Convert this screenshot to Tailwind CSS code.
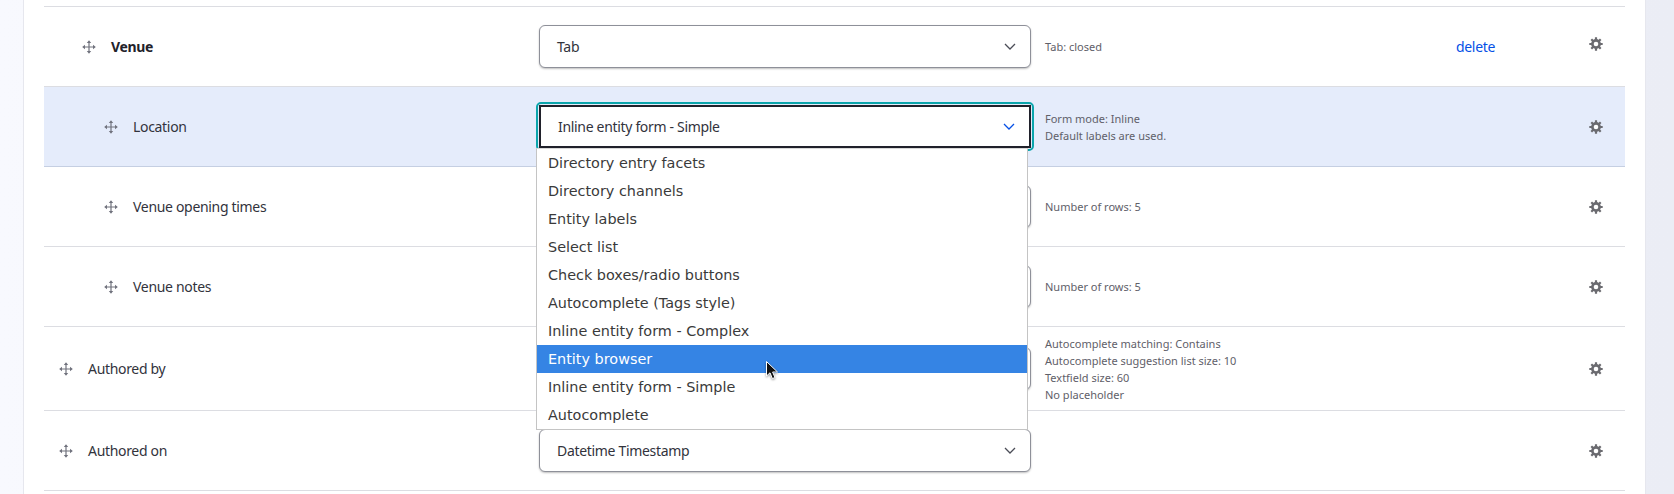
<!DOCTYPE html>
<html lang="en">
<head>
    <meta charset="UTF-8">
    <title>Manage form display</title>
    <script src="https://cdn.jsdelivr.net/npm/@tailwindcss/browser@4"></script>
</head>
<body class="h-[494px] overflow-hidden bg-gradient-to-r from-[#f8f9fe] to-[#ebedf5] font-['Noto_Sans',sans-serif] text-[14px] tracking-[-0.32px] text-[#32333c]">
    <svg class="hidden">
        <symbol id="move" viewBox="0 0 14 14">
            <path d="M7 2.5V11.5M2.5 7H11.5" stroke="currentColor" stroke-width="1.2" fill="none"/>
            <path d="M7 .2 9.2 3H4.8ZM7 13.8 4.8 11H9.2ZM.2 7 3 4.8V9.2ZM13.8 7 11 9.2V4.8Z" fill="currentColor"/>
        </symbol>
        <symbol id="cog" viewBox="0 0 14 14">
            <circle cx="7" cy="7" r="3.6" stroke="currentColor" stroke-width="2.6" fill="none"/>
            <path d="M7 .3V13.7M.3 7H13.7M2.3 2.3 11.7 11.7M11.7 2.3 2.3 11.7" stroke="currentColor" stroke-width="2.2"/>
            <circle cx="7" cy="7" r="2.3" fill="white"/>
        </symbol>
        <symbol id="chevron" viewBox="0 0 12 7">
            <path d="M1 1 6 6 11 1" stroke="currentColor" stroke-width="1.3" fill="none"/>
        </symbol>
    </svg>

    <div class="ml-[23px] w-[1623px] h-[494px] bg-white border-x border-[#e6e7ee] px-[20px]">
        <div class="h-[7px] border-b border-[#dcdde2]"></div>

        <!-- Venue -->
        <div class="h-[80px] flex items-center border-b border-[#dcdde2]">
            <div class="w-[495px] flex items-center pl-[38px]">
                <svg class="w-[14px] h-[14px] mr-[15px] text-[#70727d]"><use href="#move"/></svg>
                <span class="font-bold text-[#22222a]">Venue</span>
            </div>
            <div class="w-[492px] h-[43px] flex items-center justify-between pl-[17px] pr-[14px] bg-white border border-[#8e9099] rounded-[6px] shadow-[0_1px_2px_rgba(0,0,0,0.25)]">
                <span>Tab</span>
                <svg class="w-[12px] h-[7px] text-[#4b4d57]"><use href="#chevron"/></svg>
            </div>
            <div class="w-[411px] ml-[14px] text-[11px] leading-[17px] tracking-normal text-[#5f6069]">Tab: closed</div>
            <div class="w-[115px] pb-[1px] text-[#0550e6]">delete</div>
            <div class="w-[49px] flex justify-center -mt-[5px]"><svg class="w-[14px] h-[14px] text-[#6b6b70]"><use href="#cog"/></svg></div>
        </div>

        <!-- Location -->
        <div class="relative h-[80px] flex items-center bg-[#e5ecfb] border-b border-[#c5cfe2]">
            <div class="w-[495px] flex items-center pl-[60px]">
                <svg class="w-[14px] h-[14px] mr-[15px] text-[#70727d]"><use href="#move"/></svg>
                <span>Location</span>
            </div>
            <div class="relative w-[492px] h-[43px]">
                <div class="absolute -inset-[3px] border-2 border-[#0aa5ac] rounded-[5px]"></div>
                <div class="relative h-[43px] flex items-center justify-between pl-[17px] pr-[14px] bg-white border-2 border-[#20212b]">
                    <span>Inline entity form - Simple</span>
                    <svg class="w-[12px] h-[7px] text-[#0550e6]"><use href="#chevron"/></svg>
                </div>
                <!-- open select list -->
                <div class="absolute z-10 left-[-3px] top-[43px] w-[492px] bg-white border border-[#c4c4c4] border-t-[#d8d8d8] font-['DejaVu_Sans',sans-serif] text-[14.4px] tracking-normal text-[#3a3a3a]">
                    <div class="h-[28px] leading-[28px] pl-[11px]">Directory entry facets</div>
                    <div class="h-[28px] leading-[28px] pl-[11px]">Directory channels</div>
                    <div class="h-[28px] leading-[28px] pl-[11px]">Entity labels</div>
                    <div class="h-[28px] leading-[28px] pl-[11px]">Select list</div>
                    <div class="h-[28px] leading-[28px] pl-[11px]">Check boxes/radio buttons</div>
                    <div class="h-[28px] leading-[28px] pl-[11px]">Autocomplete (Tags style)</div>
                    <div class="h-[28px] leading-[28px] pl-[11px]">Inline entity form - Complex</div>
                    <div class="h-[28px] leading-[28px] pl-[11px] bg-[#3584e4] text-white">Entity browser</div>
                    <div class="h-[28px] leading-[28px] pl-[11px]">Inline entity form - Simple</div>
                    <div class="h-[28px] leading-[28px] pl-[11px]">Autocomplete</div>
                </div>
                <svg class="absolute z-20 left-[227px] top-[256px] w-[12px] h-[19px] drop-shadow-[0_1px_1px_rgba(0,0,0,0.4)]" viewBox="0 0 12 19">
                    <path d="M.5.5V15L4 11.8 6.4 17.6 9 16.5 6.6 11H11.5Z" fill="#111" stroke="#fff" stroke-width="1"/>
                </svg>
            </div>
            <div class="w-[411px] ml-[14px] text-[11px] leading-[17px] tracking-normal text-[#5f6069]">Form mode: Inline<br>Default labels are used.</div>
            <div class="w-[115px]"></div>
            <div class="w-[49px] flex justify-center"><svg class="w-[14px] h-[14px] text-[#6b6b70]"><use href="#cog"/></svg></div>
        </div>

        <!-- Venue opening times -->
        <div class="h-[80px] flex items-center border-b border-[#dcdde2]">
            <div class="w-[495px] flex items-center pl-[60px]">
                <svg class="w-[14px] h-[14px] mr-[15px] text-[#70727d]"><use href="#move"/></svg>
                <span>Venue opening times</span>
            </div>
            <div class="w-[492px] h-[43px] bg-white border border-[#8e9099] rounded-[6px] shadow-[0_1px_2px_rgba(0,0,0,0.25)]"></div>
            <div class="w-[411px] ml-[14px] text-[11px] leading-[17px] tracking-normal text-[#5f6069]">Number of rows: 5</div>
            <div class="w-[115px]"></div>
            <div class="w-[49px] flex justify-center"><svg class="w-[14px] h-[14px] text-[#6b6b70]"><use href="#cog"/></svg></div>
        </div>

        <!-- Venue notes -->
        <div class="h-[80px] flex items-center border-b border-[#dcdde2]">
            <div class="w-[495px] flex items-center pl-[60px]">
                <svg class="w-[14px] h-[14px] mr-[15px] text-[#70727d]"><use href="#move"/></svg>
                <span>Venue notes</span>
            </div>
            <div class="w-[492px] h-[43px] bg-white border border-[#8e9099] rounded-[6px] shadow-[0_1px_2px_rgba(0,0,0,0.25)]"></div>
            <div class="w-[411px] ml-[14px] text-[11px] leading-[17px] tracking-normal text-[#5f6069]">Number of rows: 5</div>
            <div class="w-[115px]"></div>
            <div class="w-[49px] flex justify-center"><svg class="w-[14px] h-[14px] text-[#6b6b70]"><use href="#cog"/></svg></div>
        </div>

        <!-- Authored by -->
        <div class="h-[84px] flex items-center border-b border-[#dcdde2]">
            <div class="w-[495px] flex items-center pl-[15px]">
                <svg class="w-[14px] h-[14px] mr-[15px] text-[#70727d]"><use href="#move"/></svg>
                <span>Authored by</span>
            </div>
            <div class="w-[492px] h-[43px] bg-white border border-[#8e9099] rounded-[6px] shadow-[0_1px_2px_rgba(0,0,0,0.25)]"></div>
            <div class="w-[411px] ml-[14px] text-[11px] leading-[17px] tracking-normal text-[#5f6069]">Autocomplete matching: Contains<br>Autocomplete suggestion list size: 10<br>Textfield size: 60<br>No placeholder</div>
            <div class="w-[115px]"></div>
            <div class="w-[49px] flex justify-center"><svg class="w-[14px] h-[14px] text-[#6b6b70]"><use href="#cog"/></svg></div>
        </div>

        <!-- Authored on -->
        <div class="h-[80px] flex items-center border-b border-[#dcdde2]">
            <div class="w-[495px] flex items-center pl-[15px]">
                <svg class="w-[14px] h-[14px] mr-[15px] text-[#70727d]"><use href="#move"/></svg>
                <span>Authored on</span>
            </div>
            <div class="w-[492px] h-[43px] flex items-center justify-between pl-[17px] pr-[14px] bg-white border border-[#8e9099] rounded-[6px] shadow-[0_1px_2px_rgba(0,0,0,0.25)]">
                <span>Datetime Timestamp</span>
                <svg class="w-[12px] h-[7px] text-[#4b4d57]"><use href="#chevron"/></svg>
            </div>
            <div class="w-[411px] ml-[14px]"></div>
            <div class="w-[115px]"></div>
            <div class="w-[49px] flex justify-center"><svg class="w-[14px] h-[14px] text-[#6b6b70]"><use href="#cog"/></svg></div>
        </div>
    </div>
</body>
</html>
